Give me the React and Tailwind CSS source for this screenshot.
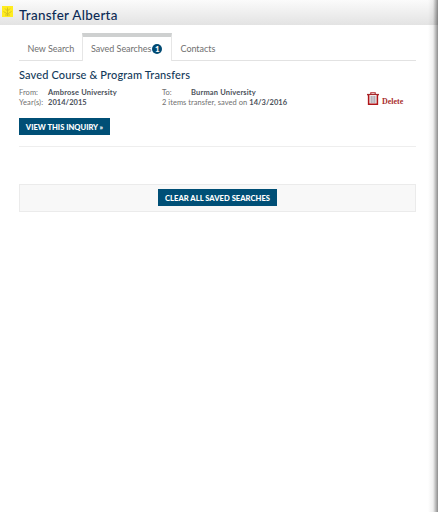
import React, { useState } from "react";

const tabs = [
  { id: "new", label: "New Search" },
  { id: "saved", label: "Saved Searches", count: 1 },
  { id: "contacts", label: "Contacts" },
];

function LeafIcon() {
  return (
    <svg className="mt-[6px] ml-[2px] h-[11px] w-[11px]" viewBox="0 0 11 11">
      <rect width="11" height="11" fill="#ffec1f" />
      <path
        d="M5.5 10V1.5M5.5 8L1.5 5.5M5.5 8L9.5 5.5M5.5 5L3 2.5M5.5 5L8 2.5M3 9h5"
        stroke="#d3bf20"
        strokeWidth="0.9"
        fill="none"
      />
    </svg>
  );
}

function TrashIcon() {
  return (
    <svg className="h-[13px] w-[12px]" viewBox="0 0 12 13" fill="none">
      <path d="M3.8 2.2V0.7h4.4v1.5" stroke="#b3262a" strokeWidth="1.1" />
      <path d="M0 2.6h12" stroke="#a5292c" strokeWidth="1.4" />
      <path d="M1.6 3v9.2h8.8V3" fill="#f3e9e9" stroke="#b01519" strokeWidth="1.5" />
      <path d="M4.2 4v7M6 4v7M7.8 4v7" stroke="#9093a0" strokeWidth="0.9" />
    </svg>
  );
}

export default function App() {
  const [active, setActive] = useState("saved");

  return (
    <div className="relative h-[512px] w-[438px] overflow-hidden bg-white font-['Lato',sans-serif] text-[#707070]">
      {/* header */}
      <header className="flex h-[25px] bg-gradient-to-b from-[#fbfbfb] to-[#e3e3e3]">
        <LeafIcon />
        <h1 className="ml-[6px] pt-[6px] text-[13.4px] leading-[18px] font-medium tracking-[0.31px] whitespace-nowrap text-[#0b2a55]">
          Transfer Alberta
        </h1>
      </header>

      <main className="mr-[22px] ml-[19px] pt-[8px]">
        {/* tabs */}
        <nav className="flex h-[28px] text-[9px] leading-[12px]">
          {tabs.map((tab) => (
            <button
              key={tab.id}
              onClick={() => setActive(tab.id)}
              className={
                active === tab.id
                  ? "flex w-[90px] items-center border-x border-t-4 border-x-[#e6e6e6] border-t-[#ced0d0] pl-[8px] tracking-[-0.04px] whitespace-nowrap"
                  : "flex items-center border-b border-[#e2e2e2] pt-[4px] pl-[8.5px] tracking-[-0.04px] whitespace-nowrap first:w-[63px] last:flex-1"
              }
            >
              {tab.label}
              {tab.count && (
                <span className="ml-[1px] flex h-[10px] w-[10px] items-center justify-center rounded-full bg-[#004a73] text-[8px] leading-[10px] font-black text-white">
                  {tab.count}
                </span>
              )}
            </button>
          ))}
        </nav>

        {/* saved inquiry */}
        <section className="h-[86px] border-b border-[#eee] pt-[5.5px]">
          <h2 className="text-[11px] leading-[16px] font-medium tracking-[0.14px] whitespace-nowrap text-[#12395a]">
            Saved Course &amp; Program Transfers
          </h2>
          <div className="flex pt-[5.5px] text-[7.5px] leading-[10px] whitespace-nowrap">
            <div className="w-[143px]">
              <div className="flex">
                <span className="w-[29px] tracking-[0.05px]">From:</span>
                <b className="font-bold tracking-[0.16px] text-[#4b515a]">
                  Ambrose University
                </b>
              </div>
              <div className="flex">
                <span className="w-[29px] tracking-[0.15px]">Year(s):</span>
                <b className="font-bold tracking-[0.05px] text-[#4b515a]">
                  2014/2015
                </b>
              </div>
            </div>
            <div className="w-[205px]">
              <div className="flex">
                <span className="w-[29px]">To:</span>
                <b className="font-bold tracking-[0.16px] text-[#4b515a]">
                  Burman University
                </b>
              </div>
              <div className="tracking-[0.04px]">
                2 items transfer, saved on{" "}
                <b className="font-bold text-[#4b515a]">14/3/2016</b>
              </div>
            </div>
            <button className="flex h-[13px] pt-[4px]">
              <TrashIcon />
              <span className="pt-[4.5px] pl-[3px] font-['Liberation_Serif',serif] text-[8px] leading-[10px] font-bold text-[#a92f2f]">
                Delete
              </span>
            </button>
          </div>
          <button className="mt-[10px] flex h-[17px] w-[91px] items-center justify-center bg-[#004f76] text-[7.6px] leading-[10px] font-black whitespace-nowrap text-white">
            VIEW THIS INQUIRY »
          </button>
        </section>

        {/* clear all */}
        <div className="mt-[37px] flex h-[28px] items-start justify-center border border-[#ebebeb] bg-[#f8f8f8] pt-[4px]">
          <button className="flex h-[17px] w-[119px] items-center justify-center bg-[#004f76] text-[7.6px] leading-[10px] font-black tracking-[0.03px] whitespace-nowrap text-white">
            CLEAR ALL SAVED SEARCHES
          </button>
        </div>
      </main>

      {/* edge shadow over the page */}
      <div className="absolute inset-y-0 right-0 w-[10px] bg-gradient-to-r from-black/0 via-black/6 to-black/45" />
    </div>
  );
}
